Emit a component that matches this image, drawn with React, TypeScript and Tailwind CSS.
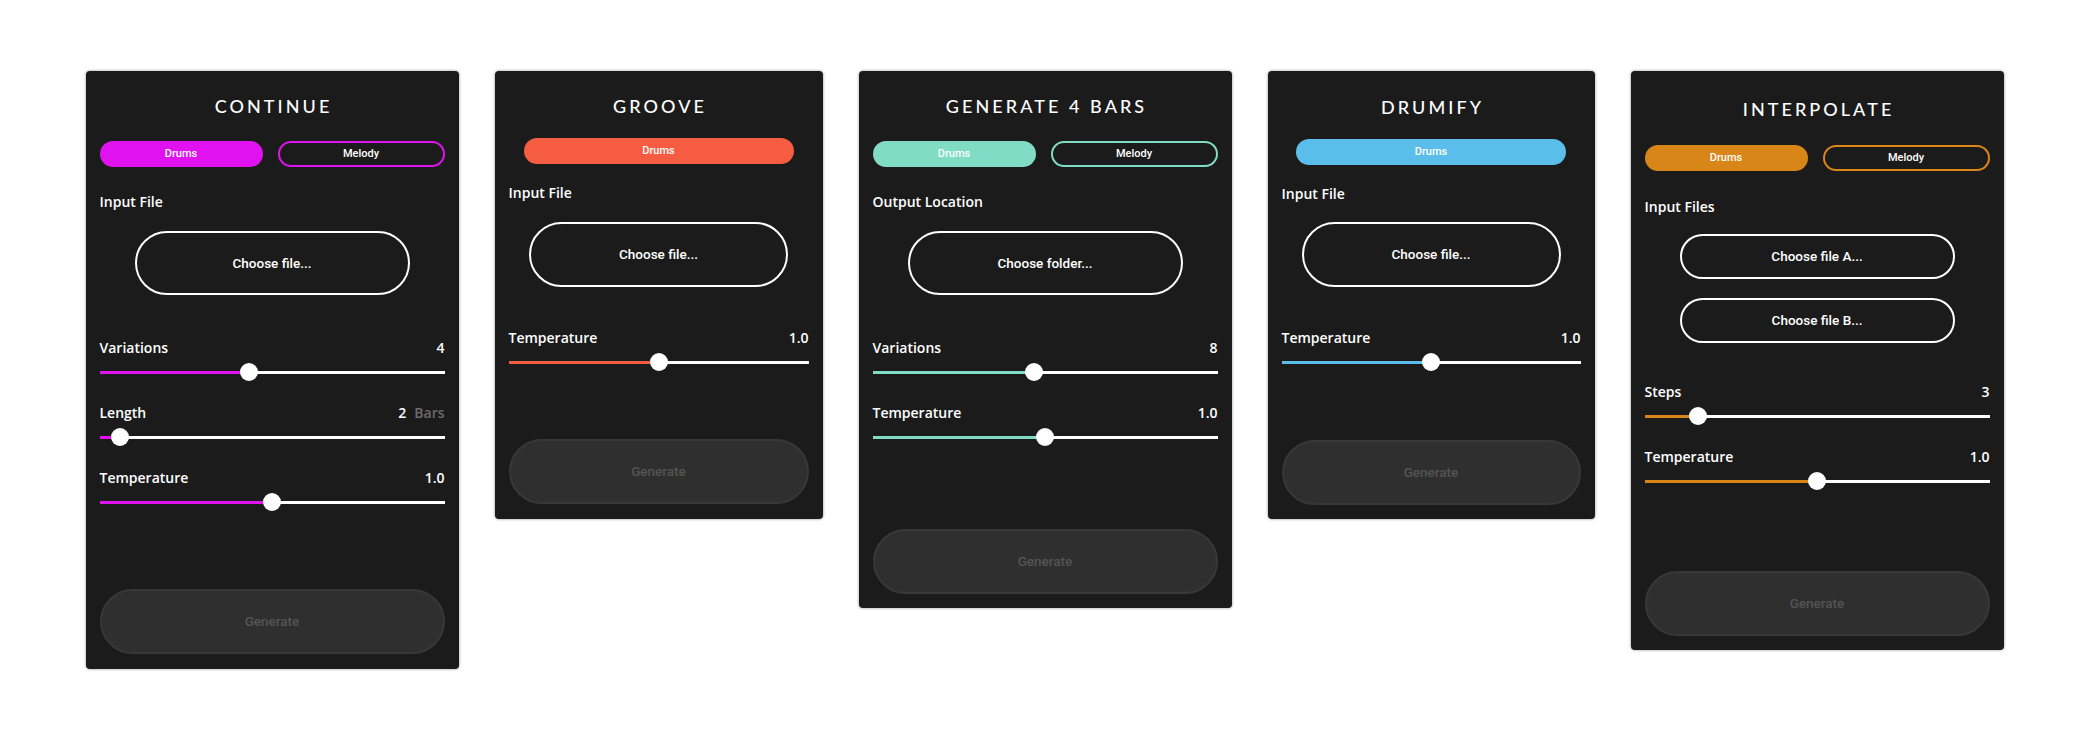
import React from "react";

type SliderProps = {
  label: string;
  value: string;
  unit?: string;
  pos: number;
  fill: string;
  className?: string;
};

function Slider({ label, value, unit, pos, fill, className }: SliderProps) {
  return (
    <div className={className}>
      <div className="flex items-baseline justify-between text-[14px] leading-5 font-semibold text-white">
        <span>{label}</span>
        <span>
          {value}
          {unit && <span className="ml-2 text-[#6b6b6b]">{unit}</span>}
        </span>
      </div>
      <div className="relative mt-[5px] h-[18px]">
        <div className="absolute inset-x-0 top-[7.5px] h-[3px] bg-white" />
        <div
          className={`absolute left-0 top-[7.5px] h-[3px] ${fill}`}
          style={{ width: `calc(9px + ${pos} * (100% - 18px))` }}
        />
        <div
          className="absolute top-0 h-[18px] w-[18px] rounded-full bg-white"
          style={{ left: `calc(${pos} * (100% - 18px))` }}
        />
      </div>
    </div>
  );
}

function Title({ children }: { children: React.ReactNode }) {
  return (
    <h2 className="h-6 pl-[0.17em] text-center font-['Lato',sans-serif] text-[18px] leading-6 font-medium tracking-[0.17em] text-white">
      {children}
    </h2>
  );
}

function ToggleRow({ solid, border, className }: { solid: string; border: string; className?: string }) {
  return (
    <div className={`flex gap-[15px] font-['Roboto',sans-serif] text-[11px] font-medium text-white ${className ?? ""}`}>
      <div className={`flex h-[26px] flex-1 items-center justify-center rounded-full ${solid}`}>Drums</div>
      <div className={`flex h-[26px] flex-1 items-center justify-center rounded-full border-2 ${border}`}>Melody</div>
    </div>
  );
}

function DrumsOnly({ solid, className }: { solid: string; className?: string }) {
  return (
    <div
      className={`mx-auto flex h-[26px] w-[270px] items-center justify-center rounded-full font-['Roboto',sans-serif] text-[11px] font-medium text-white ${solid} ${className ?? ""}`}
    >
      Drums
    </div>
  );
}

function Label({ children, className }: { children: React.ReactNode; className?: string }) {
  return <div className={`text-[14px] leading-5 font-semibold text-white ${className ?? ""}`}>{children}</div>;
}

function PickButton({ children, className }: { children: React.ReactNode; className: string }) {
  return (
    <button
      className={`mx-auto flex items-center justify-center rounded-full border-2 border-white font-['Roboto',sans-serif] text-[13.5px] font-medium text-white ${className}`}
    >
      {children}
    </button>
  );
}

function Generate() {
  return (
    <button className="mt-auto flex h-[65px] w-full items-center justify-center rounded-full border-2 border-[#383838] bg-[#2f2f2f] font-['Roboto',sans-serif] text-[13.5px] font-medium text-[#545454]">
      Generate
    </button>
  );
}

const card =
  "flex flex-col rounded-[4px] bg-[#1b1b1b] px-[14px] shadow-[0_0_3px_rgba(0,0,0,0.45)] font-['Open_Sans',sans-serif]";

export default function App() {
  return (
    <div className="flex h-[748px] w-full items-start justify-center gap-[36px] bg-white pt-[71px]">
      {/* Continue */}
      <div className={`${card} h-[598px] w-[373px] pt-[23px] pb-[15px]`}>
        <Title>CONTINUE</Title>
        <ToggleRow solid="bg-[#e012f0]" border="border-[#e012f0]" className="mt-[23px]" />
        <Label className="mt-[25px]">Input File</Label>
        <PickButton className="mt-[19px] h-[64px] w-[275px]">Choose file...</PickButton>
        <Slider className="mt-[43px]" label="Variations" value="4" pos={3 / 7} fill="bg-[#e012f0]" />
        <Slider className="mt-[22px]" label="Length" value="2" unit="Bars" pos={0.034} fill="bg-[#e012f0]" />
        <Slider className="mt-[22px]" label="Temperature" value="1.0" pos={0.5} fill="bg-[#e012f0]" />
        <Generate />
      </div>

      {/* Groove */}
      <div className={`${card} h-[448px] w-[328px] pt-[23px] pb-[15px]`}>
        <Title>GROOVE</Title>
        <DrumsOnly solid="bg-[#f65c42]" className="mt-[20px]" />
        <Label className="mt-[19px]">Input File</Label>
        <PickButton className="mt-[19px] h-[65px] w-[259px]">Choose file...</PickButton>
        <Slider className="mt-[41px]" label="Temperature" value="1.0" pos={0.5} fill="bg-[#f65c42]" />
        <Generate />
      </div>

      {/* Generate 4 bars */}
      <div className={`${card} h-[537px] w-[373px] pt-[23px] pb-[14px]`}>
        <Title>GENERATE 4 BARS</Title>
        <ToggleRow solid="bg-[#80dcc4]" border="border-[#80dcc4]" className="mt-[23px]" />
        <Label className="mt-[25px]">Output Location</Label>
        <PickButton className="mt-[19px] h-[64px] w-[275px]">Choose folder...</PickButton>
        <Slider className="mt-[43px]" label="Variations" value="8" pos={7 / 15} fill="bg-[#80dcc4]" />
        <Slider className="mt-[22px]" label="Temperature" value="1.0" pos={0.5} fill="bg-[#80dcc4]" />
        <Generate />
      </div>

      {/* Drumify */}
      <div className={`${card} h-[448px] w-[327px] pt-[24px] pb-[14px]`}>
        <Title>DRUMIFY</Title>
        <DrumsOnly solid="bg-[#5bbde9]" className="mt-[20px]" />
        <Label className="mt-[19px]">Input File</Label>
        <PickButton className="mt-[18px] h-[65px] w-[259px]">Choose file...</PickButton>
        <Slider className="mt-[41px]" label="Temperature" value="1.0" pos={0.5} fill="bg-[#5bbde9]" />
        <Generate />
      </div>

      {/* Interpolate */}
      <div className={`${card} h-[579px] w-[373px] pt-[26px] pb-[14px]`}>
        <Title>INTERPOLATE</Title>
        <ToggleRow solid="bg-[#d98619]" border="border-[#d98619]" className="mt-[24px]" />
        <Label className="mt-[26px]">Input Files</Label>
        <PickButton className="mt-[17px] h-[45px] w-[275px]">Choose file A...</PickButton>
        <PickButton className="mt-[19px] h-[45px] w-[275px]">Choose file B...</PickButton>
        <Slider className="mt-[39px]" label="Steps" value="3" pos={0.135} fill="bg-[#d98619]" />
        <Slider className="mt-[22px]" label="Temperature" value="1.0" pos={0.5} fill="bg-[#d98619]" />
        <Generate />
      </div>
    </div>
  );
}
